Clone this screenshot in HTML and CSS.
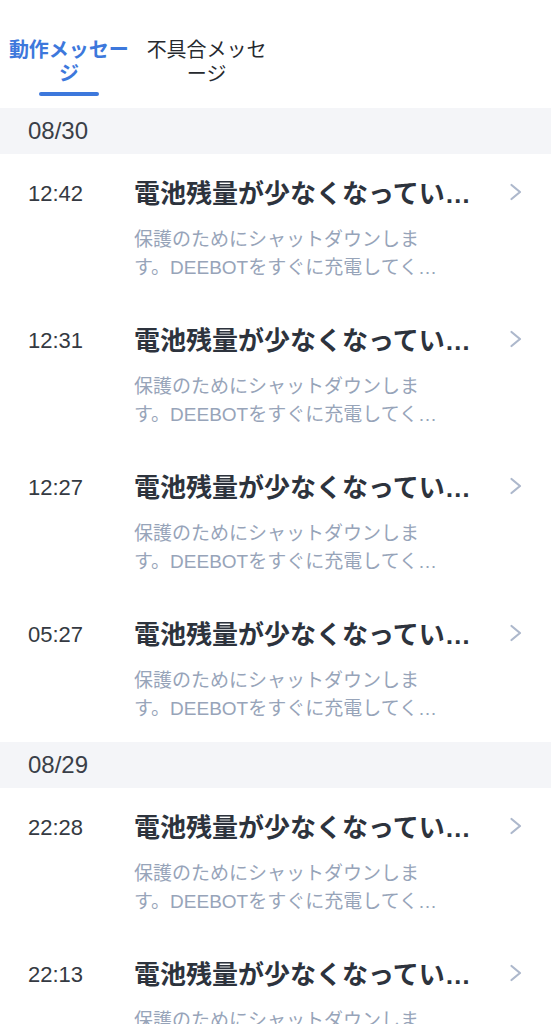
FILE: index.html
```html
<!DOCTYPE html>
<html lang="ja">
<head>
<meta charset="utf-8">
<title>メッセージ</title>
<link rel="stylesheet" href="styles.css">
</head>
<body>
<div class="tabs">
  <div class="tab active">
    <div class="tab-label">動作メッセー<br>ジ</div>
    <div class="tab-bar"></div>
  </div>
  <div class="tab">
    <div class="tab-label">不具合メッセ<br>ージ</div>
    <div class="tab-bar"></div>
  </div>
</div>

<div class="date">08/30</div>
<div class="row">
  <div class="time">12:42</div>
  <div class="content">
    <div class="title">電池残量が少なくなっています</div>
    <div class="desc">保護のためにシャットダウンします。DEEBOTをすぐに充電してください。</div>
  </div>
  <div class="chev"><svg width="14" height="20" viewBox="0 0 14 20"><path d="M2.5 3 L11 10 L2.5 17" fill="none" stroke="#adb8cc" stroke-width="2.2" stroke-linecap="round" stroke-linejoin="round"/></svg></div>
</div>
<div class="row">
  <div class="time">12:31</div>
  <div class="content">
    <div class="title">電池残量が少なくなっています</div>
    <div class="desc">保護のためにシャットダウンします。DEEBOTをすぐに充電してください。</div>
  </div>
  <div class="chev"><svg width="14" height="20" viewBox="0 0 14 20"><path d="M2.5 3 L11 10 L2.5 17" fill="none" stroke="#adb8cc" stroke-width="2.2" stroke-linecap="round" stroke-linejoin="round"/></svg></div>
</div>
<div class="row">
  <div class="time">12:27</div>
  <div class="content">
    <div class="title">電池残量が少なくなっています</div>
    <div class="desc">保護のためにシャットダウンします。DEEBOTをすぐに充電してください。</div>
  </div>
  <div class="chev"><svg width="14" height="20" viewBox="0 0 14 20"><path d="M2.5 3 L11 10 L2.5 17" fill="none" stroke="#adb8cc" stroke-width="2.2" stroke-linecap="round" stroke-linejoin="round"/></svg></div>
</div>
<div class="row">
  <div class="time">05:27</div>
  <div class="content">
    <div class="title">電池残量が少なくなっています</div>
    <div class="desc">保護のためにシャットダウンします。DEEBOTをすぐに充電してください。</div>
  </div>
  <div class="chev"><svg width="14" height="20" viewBox="0 0 14 20"><path d="M2.5 3 L11 10 L2.5 17" fill="none" stroke="#adb8cc" stroke-width="2.2" stroke-linecap="round" stroke-linejoin="round"/></svg></div>
</div>

<div class="date">08/29</div>
<div class="row">
  <div class="time">22:28</div>
  <div class="content">
    <div class="title">電池残量が少なくなっています</div>
    <div class="desc">保護のためにシャットダウンします。DEEBOTをすぐに充電してください。</div>
  </div>
  <div class="chev"><svg width="14" height="20" viewBox="0 0 14 20"><path d="M2.5 3 L11 10 L2.5 17" fill="none" stroke="#adb8cc" stroke-width="2.2" stroke-linecap="round" stroke-linejoin="round"/></svg></div>
</div>
<div class="row">
  <div class="time">22:13</div>
  <div class="content">
    <div class="title">電池残量が少なくなっています</div>
    <div class="desc">保護のためにシャットダウンします。DEEBOTをすぐに充電してください。</div>
  </div>
  <div class="chev"><svg width="14" height="20" viewBox="0 0 14 20"><path d="M2.5 3 L11 10 L2.5 17" fill="none" stroke="#adb8cc" stroke-width="2.2" stroke-linecap="round" stroke-linejoin="round"/></svg></div>
</div>
</body>
</html>
```

FILE: styles.css
```css
html, body {
  margin: 0;
  padding: 0;
  background: #ffffff;
  font-family: "Liberation Sans", "Noto Sans CJK JP", sans-serif;
  overflow: hidden;
}

.tabs {
  display: grid;
  grid-template-columns: repeat(4, 1fr);
  height: 108px;
  background: #ffffff;
}

.tab {
  display: flex;
  flex-direction: column;
  align-items: center;
  padding-top: 37px;
}

.tab-label {
  font-family: "Noto Sans CJK JP", sans-serif;
  font-size: 20px;
  line-height: 24px;
  text-align: center;
  color: #26292e;
  white-space: nowrap;
}

.tab.active .tab-label {
  color: #3d78dc;
  font-weight: 700;
}

.tab-bar {
  margin-top: 7px;
  width: 60px;
  height: 4px;
  border-radius: 2px;
  background: transparent;
}

.tab.active .tab-bar {
  background: #3d78dc;
}

.date {
  height: 46px;
  line-height: 46px;
  padding-left: 28px;
  background: #f4f5f8;
  font-size: 24px;
  color: #3a3f48;
}

.row {
  display: grid;
  grid-template-columns: 106px 1fr 30px;
  padding: 22px 28px 19px 28px;
  height: 106px;
}

.time {
  font-size: 22px;
  line-height: 36px;
  color: #353a42;
}

.content {
  min-width: 0;
}

.title {
  font-family: "Liberation Sans", "Noto Sans CJK JP", sans-serif;
  font-size: 26px;
  font-weight: 700;
  line-height: 36px;
  color: #2d333d;
  white-space: nowrap;
  overflow: hidden;
  text-overflow: ellipsis;
}

.desc {
  margin-top: 14px;
  width: 312px;
  font-size: 19px;
  line-height: 28px;
  color: #97a4b9;
  display: -webkit-box;
  -webkit-line-clamp: 2;
  -webkit-box-orient: vertical;
  overflow: hidden;
}

.chev {
  display: flex;
  justify-content: flex-end;
  align-items: flex-start;
  padding-top: 6px;
}

.chev svg {
  display: block;
}
```
